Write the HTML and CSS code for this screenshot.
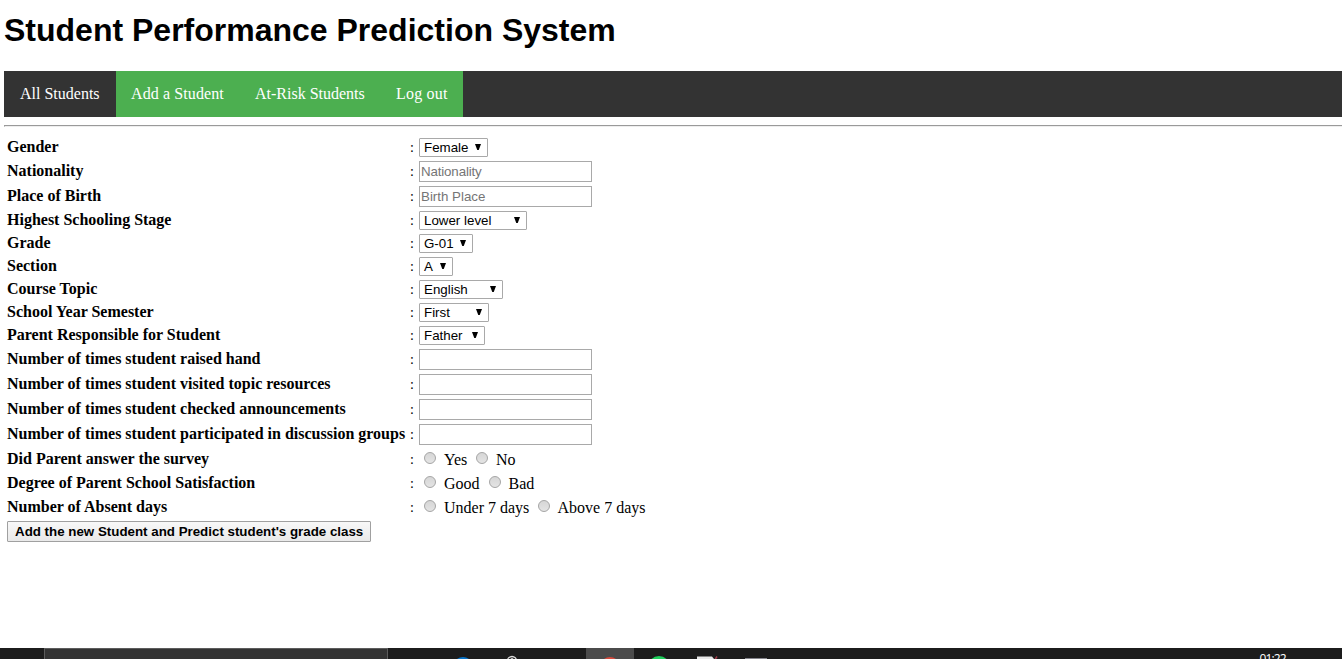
FILE: index.html
```html
<!DOCTYPE html>
<html lang="en">
<head>
<meta charset="utf-8">
<title>Student Performance Prediction System</title>
<link rel="stylesheet" href="styles.css">
</head>
<body>
<h1 class="title">Student Performance Prediction System</h1>
<nav class="nav">
  <a class="nav-item nav-all">All Students</a>
  <a class="nav-item nav-add">Add a Student</a>
  <a class="nav-item nav-risk">At-Risk Students</a>
  <a class="nav-item nav-out">Log out</a>
</nav>
<div class="rule"></div>
<form class="form">
  <div class="row row-select"><label class="label">Gender</label><span class="colon">:</span><div class="select w-gender"><span>Female</span><i class="arrow"></i></div></div>
  <div class="row row-input"><label class="label">Nationality</label><span class="colon">:</span><input class="input nationality" placeholder="Nationality"></div>
  <div class="row row-input"><label class="label">Place of Birth</label><span class="colon">:</span><input class="input" placeholder="Birth Place"></div>
  <div class="row row-select"><label class="label">Highest Schooling Stage</label><span class="colon">:</span><div class="select w-stage"><span>Lower level</span><i class="arrow"></i></div></div>
  <div class="row row-select"><label class="label">Grade</label><span class="colon">:</span><div class="select w-grade"><span>G-01</span><i class="arrow"></i></div></div>
  <div class="row row-select"><label class="label">Section</label><span class="colon">:</span><div class="select w-section"><span>A</span><i class="arrow"></i></div></div>
  <div class="row row-select"><label class="label">Course Topic</label><span class="colon">:</span><div class="select w-topic"><span>English</span><i class="arrow"></i></div></div>
  <div class="row row-select"><label class="label">School Year Semester</label><span class="colon">:</span><div class="select w-semester"><span>First</span><i class="arrow"></i></div></div>
  <div class="row row-select"><label class="label">Parent Responsible for Student</label><span class="colon">:</span><div class="select w-parent"><span>Father</span><i class="arrow"></i></div></div>
  <div class="row row-input"><label class="label">Number of times student raised hand</label><span class="colon">:</span><input class="input"></div>
  <div class="row row-input"><label class="label">Number of times student visited topic resources</label><span class="colon">:</span><input class="input"></div>
  <div class="row row-input"><label class="label">Number of times student checked announcements</label><span class="colon">:</span><input class="input"></div>
  <div class="row row-input"><label class="label">Number of times student participated in discussion groups</label><span class="colon">:</span><input class="input"></div>
  <div class="row row-radio"><label class="label">Did Parent answer the survey</label><span class="colon">:</span><div class="radios"><i class="radio"></i><span class="choice c-yes">Yes</span><i class="radio"></i><span class="choice">No</span></div></div>
  <div class="row row-radio"><label class="label">Degree of Parent School Satisfaction</label><span class="colon">:</span><div class="radios"><i class="radio"></i><span class="choice c-good">Good</span><i class="radio"></i><span class="choice c-last">Bad</span></div></div>
  <div class="row row-radio"><label class="label">Number of Absent days</label><span class="colon">:</span><div class="radios"><i class="radio"></i><span class="choice c-under">Under 7 days</span><i class="radio"></i><span class="choice c-last">Above 7 days</span></div></div>
  <button type="button" class="submit">Add the new Student and Predict student's grade class</button>
</form>
<footer class="taskbar">
  <div class="search"></div>
  <svg class="tray" width="954" height="11" viewBox="388 648 954 11">
    <rect x="586" y="648" width="48" height="11" fill="#4b4b4b"/>
    <circle cx="463" cy="667" r="10" fill="#0873c7"/>
    <circle cx="512" cy="661" r="4.5" fill="none" stroke="#ddd" stroke-width="1.3"/>
    <circle cx="512" cy="659.5" r="1.5" fill="#ccc"/>
    <circle cx="610" cy="667" r="10" fill="#d54b3d"/>
    <circle cx="659" cy="667" r="11" fill="#20ce5c"/>
    <path d="M697 656.5h15l2 2.5h-17z" fill="#e8e8e8"/>
    <path d="M717 656.5l-2 3" stroke="#a33b48" stroke-width="1.5"/>
    <path d="M745 658.5h22" stroke="#85858c"/>
    <text class="clock" x="1259.500" y="663" textLength="27">01:22</text>
  </svg>
</footer>
</body>
</html>
```
FILE: styles.css
```css
* { box-sizing: border-box; }
body {
  margin: 0;
  height: 659px;
  overflow: hidden;
  display: flex;
  flex-direction: column;
  background: #fff;
  color: #000;
  font-family: "Liberation Serif", "Times New Roman", serif;
  font-size: 16px;
}
.title {
  margin: 0;
  padding: 12px 0 0 4px;
  height: 71px;
  font: bold 32px/37px "Liberation Sans", Arial, sans-serif;
  white-space: nowrap;
}
.nav {
  display: flex;
  height: 46px;
  margin-left: 4px;
  background: #333;
}
.nav-item {
  padding-left: 16px;
  line-height: 46px;
  color: #fff;
  background: #4caf50;
  white-space: nowrap;
}
.nav-all { width: 112px; background: #333; }
.nav-add { width: 123px; padding-left: 15px; letter-spacing: 0.1px; }
.nav-risk { width: 141px; }
.nav-out { width: 83px; letter-spacing: 0.2px; }
.rule {
  height: 2px;
  margin: 8px 0 0 4px;
  border-top: 1px solid #9a9a9a;
  border-left: 1px solid #9a9a9a;
  border-bottom: 1px solid #eee;
}
.form {
  display: flex;
  flex-direction: column;
  align-items: flex-start;
  padding: 11px 0 0 7px;
}
.row { display: flex; align-items: flex-start; }
.row-select { height: 23px; line-height: 18px; }
.row-input { height: 25px; line-height: 20px; }
.row-radio { height: 24px; line-height: 20px; }
.label { width: 403px; font-weight: bold; white-space: nowrap; }
.colon { width: 9px; padding-top: 1px; font-size: 14px; }
.select {
  display: flex;
  justify-content: space-between;
  height: 19px;
  padding: 0 6px 0 4px;
  border: 1px solid #a9a9a9;
  border-radius: 1px;
  font: 13.333px/17px "Liberation Sans", Arial, sans-serif;
  white-space: nowrap;
}
.arrow {
  width: 6px;
  height: 6px;
  margin-top: 5px;
  background: #000;
  clip-path: polygon(0 0, 100% 0, 62% 100%, 38% 100%);
}
.w-gender { width: 69px; }
.w-stage { width: 108px; }
.w-grade { width: 54px; }
.w-section { width: 34px; }
.w-topic { width: 84px; }
.w-semester { width: 70px; }
.w-parent { width: 66px; }
.input {
  width: 173px;
  height: 21px;
  padding: 0 1px;
  border: 1px solid #a9a9a9;
  border-radius: 0;
  background: #fff;
  font: 13.333px "Liberation Sans", Arial, sans-serif;
}
.nationality { letter-spacing: -0.15px; }
.input::placeholder { color: #757575; }
.radios { display: flex; padding-left: 5px; line-height: 22px; }
.radio {
  width: 12px;
  height: 12px;
  margin-top: 3px;
  border: 1px solid #a5a5a5;
  border-radius: 50%;
  background: linear-gradient(#d6d6d6, #e4e4e4);
}
.choice { padding-left: 8px; white-space: nowrap; }
.c-yes { width: 40px; }
.c-good { width: 53px; }
.c-under { width: 102px; }
.c-last { padding-left: 7.5px; }
.submit {
  width: 364px;
  height: 21px;
  padding: 0 7px;
  border: 1px solid #a0a0a0;
  border-radius: 1px;
  background: linear-gradient(#f8f8f8, #e9e9e9);
  color: #000;
  font: bold 13.333px/19px "Liberation Sans", Arial, sans-serif;
  text-align: left;
  white-space: nowrap;
}
.taskbar {
  display: flex;
  height: 11px;
  margin-top: auto;
  padding-left: 44px;
  background: #1c1c1c;
}
.search {
  width: 344px;
  height: 11px;
  border: 1px solid #5c5c5c;
  border-bottom: 0;
  background: #333;
}
.tray { display: block; }
.clock { font: 12px "Open Sans", sans-serif; fill: #fff; }
```
